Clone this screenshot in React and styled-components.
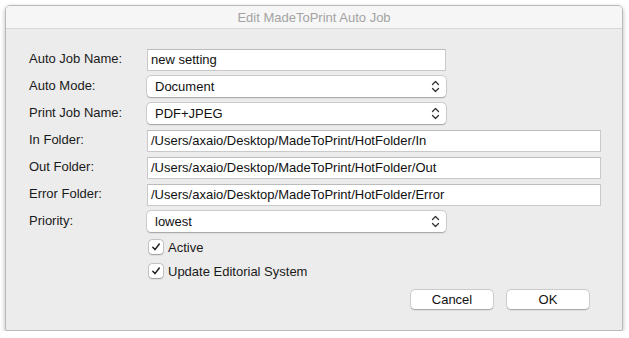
import React from "react";
import styled, { createGlobalStyle } from "styled-components";

const Global = createGlobalStyle`
  html, body { margin: 0; padding: 0; background: #ffffff; }
  body { font-family: "Liberation Sans", Arial, sans-serif; }
  #root { padding: 5px 0 0 5px; }
`;

const Window = styled.div`
  width: 616px;
  height: 324px;
  border: 1px solid #b9b9b9;
  border-radius: 5px 5px 2px 2px;
  background: #ececec;
  box-shadow: 0 2px 5px rgba(0, 0, 0, 0.28);
  display: flex;
  flex-direction: column;
  overflow: hidden;
`;

const TitleBar = styled.div`
  height: 21px;
  flex: none;
  background: #f6f6f6;
  border-bottom: 1px solid #d8d8d8;
  display: flex;
  align-items: center;
  justify-content: center;
  font-size: 13px;
  color: #a3a3a3;
  padding-top: 1px;
`;

const Body = styled.div`
  flex: 1;
  padding: 20px 22px 21px 23px;
  display: flex;
  flex-direction: column;
`;

const Form = styled.div`
  display: grid;
  grid-template-columns: 118px 1fr;
  row-gap: 5px;
  align-items: center;
`;

const Label = styled.div`
  font-size: 13px;
  color: #1a1a1a;
  height: 22px;
  line-height: 20px;
`;

const FieldCell = styled.div`
  display: flex;
`;

const TextField = styled.div`
  box-sizing: border-box;
  width: ${(p) => (p.$wide ? "454px" : "299px")};
  height: 22px;
  background: #fff;
  border: 1px solid #c9c9c9;
  border-top-color: #bcbcbc;
  padding: 0 3px;
  font-size: 13px;
  line-height: 20px;
  color: #111;
  white-space: nowrap;
  overflow: hidden;
`;

const Popup = styled.div`
  box-sizing: border-box;
  width: 299px;
  height: 21px;
  margin: 0 0 1px;
  background: #fff;
  border-radius: 4px;
  box-shadow: 0 0 0 0.5px rgba(0, 0, 0, 0.18), 0 0.5px 1.5px rgba(0, 0, 0, 0.25);
  padding: 0 6px 0 8px;
  font-size: 13px;
  line-height: 21px;
  color: #111;
  display: flex;
  align-items: center;
  justify-content: space-between;
`;

const Checks = styled.div`
  display: flex;
  flex-direction: column;
  gap: 10px;
  margin: 7px 0 0 120px;
`;

const CheckRow = styled.div`
  display: flex;
  align-items: center;
  gap: 5px;
  font-size: 13px;
  color: #1a1a1a;
  height: 14px;
`;

const Box = styled.div`
  box-sizing: border-box;
  width: 14px;
  height: 14px;
  background: #fff;
  border-radius: 3px;
  box-shadow: 0 0 0 0.5px rgba(0, 0, 0, 0.25), 0 0.5px 1.5px rgba(0, 0, 0, 0.25);
  display: flex;
  align-items: center;
  justify-content: center;
`;

const Buttons = styled.div`
  margin-top: auto;
  display: flex;
  justify-content: flex-end;
  gap: 14px;
  padding-right: 11px;
`;

const Button = styled.div`
  box-sizing: border-box;
  width: 82px;
  height: 19px;
  background: #fff;
  border-radius: 4px;
  box-shadow: 0 0 0 0.5px rgba(0, 0, 0, 0.18), 0 0.5px 1.5px rgba(0, 0, 0, 0.25);
  font-size: 13px;
  line-height: 19px;
  text-align: center;
  color: #111;
`;

const Chevrons = () => (
  <svg width="9" height="13" viewBox="0 0 9 13" fill="none" stroke="#333" strokeWidth="1.3" strokeLinecap="round" strokeLinejoin="round">
    <path d="M1.5 4.5 L4.5 1.5 L7.5 4.5" />
    <path d="M1.5 8.5 L4.5 11.5 L7.5 8.5" />
  </svg>
);

const Check = () => (
  <svg width="10" height="10" viewBox="0 0 10 10" fill="none" stroke="#222" strokeWidth="1.5" strokeLinecap="round" strokeLinejoin="round">
    <path d="M1.8 5.3 L4 7.6 L8.3 2" />
  </svg>
);

const rows = [
  { label: "Auto Job Name:", type: "text", value: "new setting" },
  { label: "Auto Mode:", type: "popup", value: "Document" },
  { label: "Print Job Name:", type: "popup", value: "PDF+JPEG" },
  { label: "In Folder:", type: "wide", value: "/Users/axaio/Desktop/MadeToPrint/HotFolder/In" },
  { label: "Out Folder:", type: "wide", value: "/Users/axaio/Desktop/MadeToPrint/HotFolder/Out" },
  { label: "Error Folder:", type: "wide", value: "/Users/axaio/Desktop/MadeToPrint/HotFolder/Error" },
  { label: "Priority:", type: "popup", value: "lowest" },
];

export default function App() {
  return (
    <>
      <Global />
      <Window>
        <TitleBar>Edit MadeToPrint Auto Job</TitleBar>
        <Body>
          <Form>
            {rows.map((r) => (
              <React.Fragment key={r.label}>
                <Label>{r.label}</Label>
                <FieldCell>
                  {r.type === "popup" ? (
                    <Popup>
                      <span>{r.value}</span>
                      <Chevrons />
                    </Popup>
                  ) : (
                    <TextField $wide={r.type === "wide"}>{r.value}</TextField>
                  )}
                </FieldCell>
              </React.Fragment>
            ))}
          </Form>
          <Checks>
            <CheckRow>
              <Box><Check /></Box>
              Active
            </CheckRow>
            <CheckRow>
              <Box><Check /></Box>
              Update Editorial System
            </CheckRow>
          </Checks>
          <Buttons>
            <Button>Cancel</Button>
            <Button>OK</Button>
          </Buttons>
        </Body>
      </Window>
    </>
  );
}
